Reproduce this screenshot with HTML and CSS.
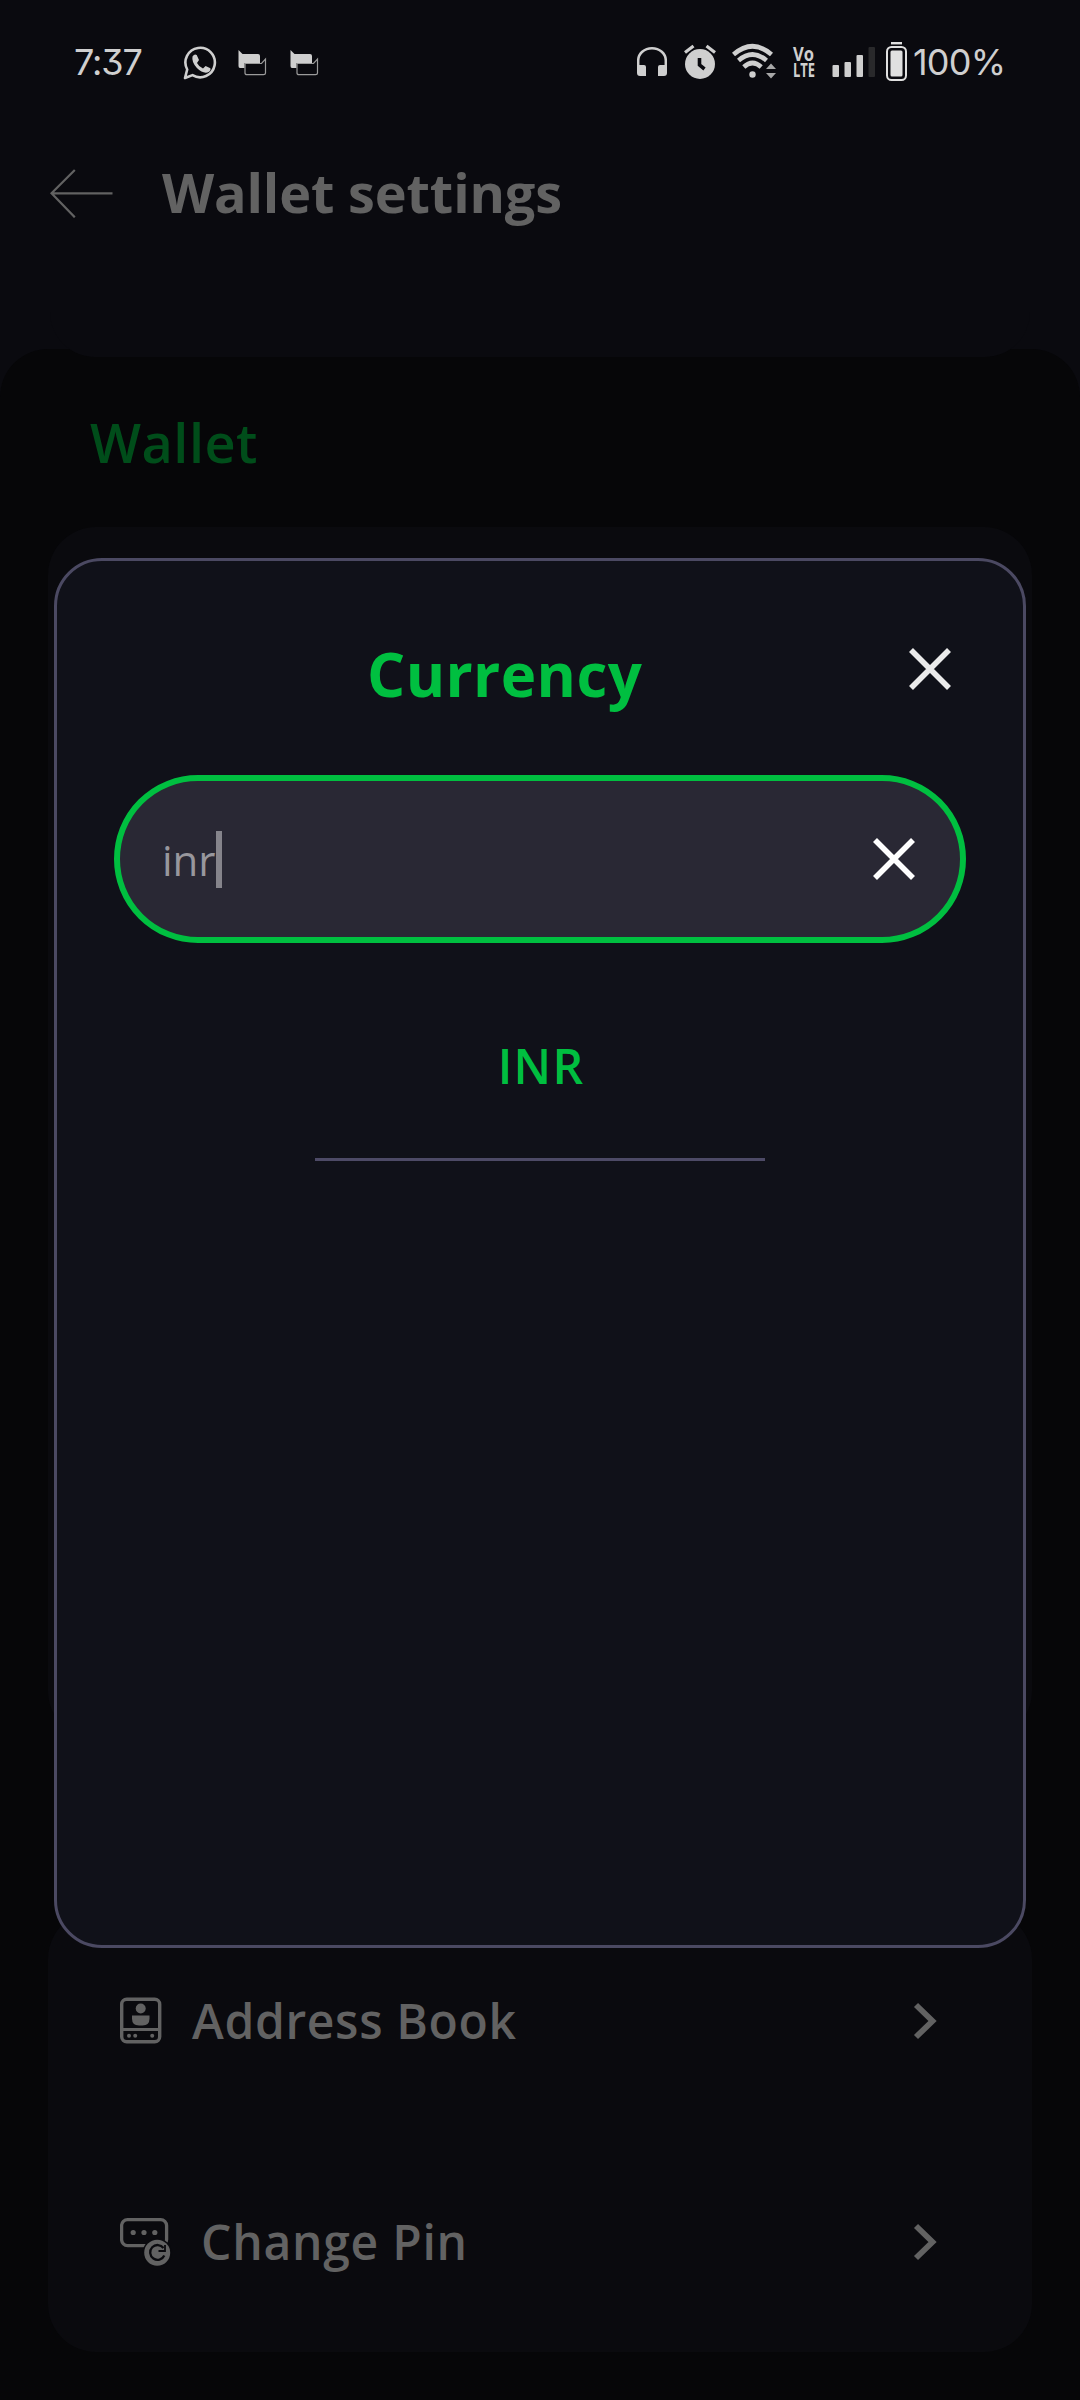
FILE: index.html
```html
<!DOCTYPE html>
<html lang="en">
<head>
<meta charset="utf-8">
<title>Wallet settings</title>
<link rel="stylesheet" href="styles.css">
</head>
<body>
<div class="screen">
  <div class="status">
    <span class="clock">7:37</span>
    <div class="notifications">
      <svg width="34" height="40" viewBox="183 42 34 40"><path d="M185 78l2.200-8.500a14.700 14.700 0 1 1 5.300 5.600z" fill="none" stroke="#cfcfcf" stroke-width="2.600" stroke-linejoin="round"/><path d="M192.500 56.500q2-3 4.200-1.500l2.300 5-2 3q2 4 6 5.500l2.600-2.600 4.800 2.300q.8 3-3 4.300-5 1-10.500-4.500-5.500-6-4.400-11.500z" fill="#cfcfcf"/></svg>
      <svg width="30" height="40" viewBox="237 42 30 40"><path d="M238.500 50l4 4H258q2 0 2 2v7h-15.500v5H240q-1.500 0-1.500-2z" fill="#cfcfcf"/><path d="M245 63.500h16.500l4-4.500v14q0 1.700-2 1.700H247q-2 0-2-1.700z" fill="#0a0a0f" stroke="#9b9b9b" stroke-width="1.200"/></svg>
      <svg width="30" height="40" viewBox="237 42 30 40"><path d="M238.500 50l4 4H258q2 0 2 2v7h-15.500v5H240q-1.500 0-1.500-2z" fill="#cfcfcf"/><path d="M245 63.500h16.500l4-4.500v14q0 1.700-2 1.700H247q-2 0-2-1.700z" fill="#0a0a0f" stroke="#9b9b9b" stroke-width="1.200"/></svg>
    </div>
    <div class="system">
      <svg width="30" height="40" viewBox="637 42 30 40"><path d="M638.200 68v-7.500a13.800 12.300 0 0 1 27.600 0V68" fill="none" stroke="#cfcfcf" stroke-width="2.500"/><path d="M637 65h7q2 0 2 2v9h-6q-3 0-3-3zM667 65h-7q-2 0-2 2v9h6q3 0 3-3z" fill="#cfcfcf"/></svg>
      <svg width="32" height="40" viewBox="684 42 32 40"><circle cx="700" cy="64" r="15" fill="#cfcfcf"/><path d="M685 52.500l8.500-6.500M715 52.500l-8.500-6.500" stroke="#cfcfcf" stroke-width="3.200"/><path d="M699.500 58v7l5 4" fill="none" stroke="#0a0a0f" stroke-width="3.600"/></svg>
      <svg width="44" height="40" viewBox="732 42 44 40"><g fill="none" stroke="#cfcfcf" stroke-width="4.600"><path d="M733.500 54.500q19-16.500 38 0"/><path d="M738.500 60.500q14-12 28 0"/><path d="M743.800 67q8.700-8 17.400 0"/></g><circle cx="752.500" cy="74.500" r="3.200" fill="#cfcfcf"/><path d="M766 69l5-5.500 5 5.500zM766 73l5 5.500 5-5.500z" fill="#a8a8a8"/></svg>
      <svg class="volte" width="22" height="40" viewBox="793 42 22 40"><text x="793" y="61" textLength="21" lengthAdjust="spacingAndGlyphs">Vo</text><text x="793" y="77" textLength="22" lengthAdjust="spacingAndGlyphs">LTE</text></svg>
      <svg width="43" height="40" viewBox="832 42 43 40"><g fill="#cfcfcf"><rect x="832.500" y="65" width="6.500" height="12" rx="1"/><rect x="844.500" y="62" width="6.500" height="15" rx="1"/><rect x="856.500" y="55" width="6.500" height="22" rx="1"/></g><rect x="868.500" y="47" width="6.500" height="30" rx="1" fill="#29292b"/></svg>
      <svg width="22" height="40" viewBox="886 42 22 40"><rect x="887" y="47" width="19" height="33" rx="4.500" fill="none" stroke="#e0e0e0" stroke-width="2"/><rect x="890.500" y="50.500" width="12" height="26" rx="1.500" fill="#e0e0e0"/><path d="M891 43.200h11" stroke="#e0e0e0" stroke-width="2.400"/></svg>
      <span class="level">100%</span>
    </div>
  </div>

  <header class="header">
    <svg width="64" height="50" viewBox="50 168 64 50"><path d="M112.500 193.300H51.500M74.800 170L51.500 193.300l23.300 24" fill="none" stroke="#626262" stroke-width="2.200"/></svg>
    <h1 class="title">Wallet settings</h1>
  </header>

  <main class="panel">
    <div class="lip"></div>
    <h2 class="section">Wallet</h2>
    <section class="card card-main"></section>
    <section class="card card-security">
      <div class="row">
        <svg width="42" height="48" viewBox="120 1996.500 42 48"><rect x="121.700" y="1998.700" width="38" height="42.600" rx="5" fill="none" stroke="#626262" stroke-width="3.400"/><path d="M121 2029h39" stroke="#626262" stroke-width="3"/><circle cx="140.700" cy="2008" r="5" fill="#626262"/><path d="M132 2015h17.500v3q0 7-7 7h-3.500q-7 0-7-7z" fill="#626262"/><g fill="#626262"><circle cx="129" cy="2035.200" r="2"/><circle cx="135.200" cy="2035.200" r="2"/><circle cx="152.200" cy="2035.200" r="2"/></g></svg>
        <span class="label">Address Book</span>
        <svg class="chevron" width="24" height="38" viewBox="913 2002 24 38"><path d="M916 2005l16.500 16L916 2037" fill="none" stroke="#626262" stroke-width="5.800"/></svg>
      </div>
      <div class="row">
        <svg width="52" height="50" viewBox="120 2217 52 50"><rect x="121.600" y="2219.600" width="45" height="26" rx="6" fill="none" stroke="#626262" stroke-width="3.300"/><g fill="#626262"><circle cx="133.200" cy="2232.500" r="2.600"/><circle cx="144" cy="2232.500" r="2.600"/><circle cx="154.800" cy="2232.500" r="2.600"/></g><circle cx="157.200" cy="2252.800" r="14.500" fill="#0a0a0e"/><circle cx="157.200" cy="2252.800" r="13" fill="#626262"/><path d="M163.500 2248a7.400 7.400 0 1 0 .8 7.500" fill="none" stroke="#0a0a0e" stroke-width="2.300"/><path d="M165 2245v6h-6.500" fill="none" stroke="#0a0a0e" stroke-width="1.800"/></svg>
        <span class="label label-pin">Change Pin</span>
        <svg class="chevron" width="24" height="38" viewBox="913 2002 24 38"><path d="M916 2005l16.500 16L916 2037" fill="none" stroke="#626262" stroke-width="5.800"/></svg>
      </div>
    </section>
  </main>

  <div class="dialog" role="dialog">
    <div class="dialog-head">
      <h2 class="dialog-title">Currency</h2>
      <svg width="42" height="42" viewBox="0 0 42 42"><path d="M2 2l38 38M40 2L2 40" stroke="#ebebeb" stroke-width="5.600"/></svg>
    </div>
    <div class="search">
      <span class="query">inr</span><span class="caret"></span>
      <svg width="42" height="42" viewBox="0 0 42 42"><path d="M2 2l38 38M40 2L2 40" stroke="#fff" stroke-width="5.600"/></svg>
    </div>
    <div class="option">INR</div>
  </div>
</div>
</body>
</html>
```
FILE: styles.css
```css
* { box-sizing: border-box; }
body { margin: 0; background: #060608; font-family: "Open Sans", sans-serif; }
h1, h2 { margin: 0; }
svg { display: block; flex: none; }

.screen { position: relative; width: 1080px; height: 2400px; overflow: hidden; background: #0a0a0f; }

.status { display: flex; align-items: center; height: 124px; padding: 0 76px 0 74px; color: #cfcfcf; font-family: Inter, sans-serif; font-size: 36px; line-height: 40px; }
.clock { width: 109px; letter-spacing: -1.1px; font-feature-settings: "cv09"; }
.notifications { display: flex; }
.notifications svg + svg { margin-left: 20px; }
.notifications svg + svg + svg { margin-left: 22px; }
.system { display: flex; align-items: center; margin-left: auto; }
.system svg { margin-right: 17px; }
.system svg:nth-child(2) { margin-right: 16px; }
.system svg:nth-child(5) { margin-right: 11px; }
.system svg:nth-child(6) { margin-right: 5px; }
.level { width: 91px; white-space: nowrap; letter-spacing: -.8px; }
.volte { overflow: visible; font-family: "Open Sans", sans-serif; font-size: 19.500px; font-weight: 700; fill: #cfcfcf; }

.header { display: flex; align-items: center; gap: 48px; height: 138px; padding-left: 50px; }
.title { margin-bottom: 2px; color: #626262; font-size: 54px; line-height: 74px; font-weight: 700; letter-spacing: -.15px; white-space: nowrap; }

.panel { display: flow-root; height: 2051px; margin-top: 87px; padding: 0 48px; background: #060608; border-radius: 48px 48px 0 0; }
.lip { height: 57px; margin: -49px 2px 0; background: #0a0a0f; border-radius: 0 0 45px 45px; }
.section { padding: 48px 0 0 42px; color: #004d1a; font-size: 54px; line-height: 74px; font-weight: 600; letter-spacing: .5px; }
.card { background: #0a0a0e; border-radius: 48px; }
.card-main { height: 1212px; margin-top: 48px; }
.card-security { height: 441px; margin-top: 172px; }
.row { display: flex; align-items: center; height: 221px; padding: 0 95px 2px 72px; }
.label { margin-left: 30px; color: #626262; font-size: 48px; line-height: 66px; font-weight: 600; letter-spacing: .65px; white-space: nowrap; }
.label-pin { margin-left: 29px; letter-spacing: .75px; }
.chevron { margin-left: auto; }

.dialog { position: absolute; left: 54px; top: 558px; width: 972px; height: 1390px; background: #101119; border: 3px solid #4b4962; border-radius: 48px; }
.dialog-head { display: flex; align-items: center; justify-content: space-between; height: 214px; padding: 2px 72px 0 310px; }
.dialog-title { padding-top: 10px; color: #00bf40; font-size: 60px; line-height: 82px; font-weight: 700; letter-spacing: .4px; }
.search { display: flex; align-items: center; height: 168px; margin: 0 57px; padding: 0 45px 0 42px; background: #292834; border: 6px solid #00bf40; border-radius: 84px; }
.query { padding-top: 2px; color: #98979d; font-size: 42px; line-height: 58px; }
.caret { width: 6px; height: 57px; background: #85848b; }
.search svg { margin-left: auto; }
.option { width: 450px; height: 218px; margin: 0 auto; padding: 90px 0 0 2px; border-bottom: 3px solid #4d4a66; color: #00bf40; font-size: 48px; line-height: 66px; font-weight: 600; letter-spacing: 1.2px; text-align: center; }
```
